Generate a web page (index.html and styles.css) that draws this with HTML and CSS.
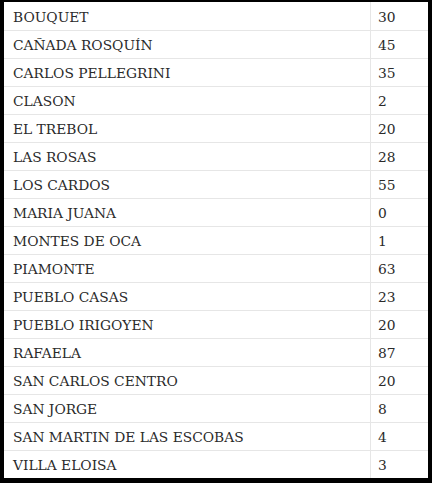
FILE: index.html
```html
<!DOCTYPE html>
<html>
<head>
<meta charset="utf-8">
<link rel="stylesheet" href="styles.css">
</head>
<body>
<div class="frame">
<table class="grid">
<tr><td class="name">BOUQUET</td><td class="num">30</td></tr>
<tr><td class="name">CAÑADA ROSQUÍN</td><td class="num">45</td></tr>
<tr><td class="name">CARLOS PELLEGRINI</td><td class="num">35</td></tr>
<tr><td class="name">CLASON</td><td class="num">2</td></tr>
<tr><td class="name">EL TREBOL</td><td class="num">20</td></tr>
<tr><td class="name">LAS ROSAS</td><td class="num">28</td></tr>
<tr><td class="name">LOS CARDOS</td><td class="num">55</td></tr>
<tr><td class="name">MARIA JUANA</td><td class="num">0</td></tr>
<tr><td class="name">MONTES DE OCA</td><td class="num">1</td></tr>
<tr><td class="name">PIAMONTE</td><td class="num">63</td></tr>
<tr><td class="name">PUEBLO CASAS</td><td class="num">23</td></tr>
<tr><td class="name">PUEBLO IRIGOYEN</td><td class="num">20</td></tr>
<tr><td class="name">RAFAELA</td><td class="num">87</td></tr>
<tr><td class="name">SAN CARLOS CENTRO</td><td class="num">20</td></tr>
<tr><td class="name">SAN JORGE</td><td class="num">8</td></tr>
<tr><td class="name">SAN MARTIN DE LAS ESCOBAS</td><td class="num">4</td></tr>
<tr><td class="name">VILLA ELOISA</td><td class="num">3</td></tr>
</table>
</div>
</body>
</html>
```
FILE: styles.css
```css
html, body {
  margin: 0;
  padding: 0;
  background: #000;
}
.frame {
  width: 432px;
  height: 483px;
  box-sizing: border-box;
  padding: 2px 4px 5px 4px;
}
.grid {
  width: 424px;
  border-collapse: collapse;
  background: #fff;
  font-family: "DejaVu Serif", serif;
  font-size: 13.8px;
  color: #2a2a2a;
}
.grid tr {
  height: 28px;
}
.grid td {
  border-bottom: 1px solid #e6e6e6;
  padding: 2px 0 0 9px;
  height: 25px;
  vertical-align: middle;
  line-height: 16px;
}
.grid tr:last-child td {
  border-bottom: none;
}
.grid .name {
  width: 357px;
  border-right: 1px solid #e6e6e6;
}
.grid .num {
  padding-left: 7px;
}
```
